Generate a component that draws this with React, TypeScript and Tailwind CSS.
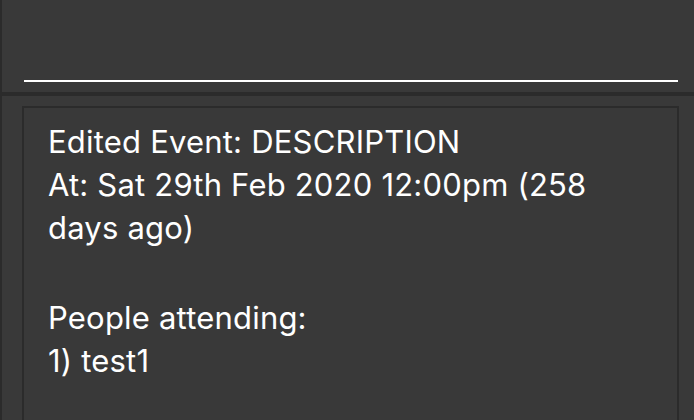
import React from 'react'

const lines = [
    'Edited Event: DESCRIPTION',
    'At: Sat 29th Feb 2020 12:00pm (258 days ago)',
    '',
    'People attending:',
    '1) test1',
]

const App = () => {
    return (
        <div className="h-[420px] w-full overflow-hidden bg-[#2b2b2b] pl-[2px] flex flex-col gap-[4px]">
            <div className="h-[92px] bg-[#393939] flex flex-col justify-end pb-[10px] pl-[22px] pr-[16px]">
                <div className="h-[2px] bg-white" />
            </div>
            <div className="flex-1 bg-[#393939] pt-[10px] pl-[20px] pr-[15px]">
                <div className="h-full border-2 border-b-0 border-[#2b2b2b] pt-[12px] pl-[24px] pr-[20px]">
                    <div className="text-[31px] leading-[43px] tracking-[0.2px] text-white font-['Inter',sans-serif]">
                        {lines.map((line, i) => (
                            <p key={i} className={line ? '' : 'h-[47px]'}>{line}</p>
                        ))}
                    </div>
                </div>
            </div>
        </div>
    )
}

export default App
